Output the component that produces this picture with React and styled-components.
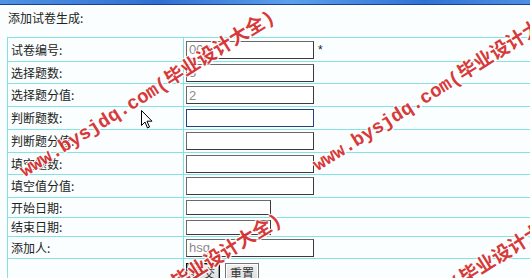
import React from "react";
import styled, { createGlobalStyle } from "styled-components";

const GlobalStyle = createGlobalStyle`
  html, body {
    margin: 0;
    padding: 0;
    background: #fbfefe;
    overflow: hidden;
  }
  body {
    font-family: "Noto Sans CJK SC", "Liberation Sans", sans-serif;
    font-size: 12px;
    color: #222;
  }
`;

const Page = styled.div`
  position: relative;
  width: 530px;
  height: 278px;
  overflow: hidden;
`;

const TopBar = styled.div`
  height: 4px;
  background: linear-gradient(90deg, #4f93e6 0%, #2f6fd2 30%, #5aa0ee 55%, #2f72d6 80%, #4e8fe4 100%);
  border-bottom: 1px solid #1d3f8f;
`;

const Content = styled.div`
  padding: 4px 0 0 7px;
`;

const Heading = styled.div`
  height: 17px;
  line-height: 17px;
  padding-left: 1px;
  margin-bottom: 11px;
`;

const FormTable = styled.table`
  width: 560px;
  border-collapse: collapse;
  background: #fafefe;

  td {
    border: 1px solid #84e2e2;
    padding: 0 2px;
    vertical-align: middle;
  }
`;

const Row = styled.tr`
  height: ${(p) => p.$h}px;
`;

const LabelCell = styled.td`
  width: 170px;
  padding-left: 3px !important;
  line-height: 14px;
`;

const Field = styled.input`
  box-sizing: border-box;
  display: block;
  width: ${(p) => (p.$short ? "85px" : "128px")};
  height: ${(p) => (p.$short ? "15px" : "18px")};
  margin: 0;
  padding: 0 2px;
  border: 1px solid ${(p) => (p.$focus ? "#24447e" : "#3a3a3a")};
  border-top-color: ${(p) => (p.$focus ? "#24447e" : "#6a6a6a")};
  border-left-color: ${(p) => (p.$focus ? "#24447e" : "#6a6a6a")};
  background: #fff;
  font-family: "Liberation Sans", Arial, sans-serif;
  font-size: 13px;
  color: #8a8a8a;
  outline: none;
`;

const FieldWrap = styled.div`
  display: flex;
  align-items: center;
  gap: 4px;
`;

const Star = styled.span`
  font-family: "Liberation Sans", Arial, sans-serif;
  font-size: 12px;
  color: #222;
`;

const Buttons = styled.div`
  display: flex;
  gap: 5px;
  padding-top: 3px;
`;

const Button = styled.button`
  box-sizing: border-box;
  width: 34px;
  height: 19px;
  padding: 0;
  font-family: "Noto Sans CJK SC", sans-serif;
  font-size: 12px;
  color: #333;
  background: linear-gradient(#f2f2f2, #dcdcdc);
  border: 1px solid ${(p) => (p.$primary ? "#111" : "#777")};
  box-shadow: ${(p) => (p.$primary ? "inset 0 0 0 1px #999" : "inset 0 0 0 1px #fff")};
`;

const Overlay = styled.div`
  position: absolute;
  inset: 0;
  pointer-events: none;
`;

const Mark = styled.span`
  position: absolute;
  white-space: nowrap;
  transform: translateY(-50%) rotate(-32deg);
  transform-origin: 0 50%;
  font-family: "Liberation Mono", "Noto Sans CJK SC", monospace;
  font-weight: bold;
  font-size: 19px;
  line-height: 20px;
  color: #d42a2a;
  text-shadow: 1px 0 #fff, -1px 0 #fff, 0 1px #fff, 0 -1px #fff, 1px 1px #fff, -1px -1px #fff;
  opacity: 0.92;
`;

const Cursor = styled.svg`
  position: absolute;
  left: 141px;
  top: 110px;
`;

const rows = [
  { label: "试卷编号:", value: "002", star: true, h: 24 },
  { label: "选择题数:", value: "3", h: 22 },
  { label: "选择题分值:", value: "2", h: 23 },
  { label: "判断题数:", value: "", focus: true, h: 23 },
  { label: "判断题分值:", value: "", h: 23 },
  { label: "填空题数:", value: "", h: 22 },
  { label: "填空值分值:", value: "", h: 23 },
  { label: "开始日期:", value: "", short: true, h: 20 },
  { label: "结束日期:", value: "", short: true, h: 19 },
  { label: "添加人:", value: "hsg", h: 22 },
];

const marks = [
  { x: 22, y: 173 },
  { x: 315, y: 167 },
  { x: 29, y: 376 },
  { x: 317, y: 371 },
];

const App = () => {
  return (
    <Page>
      <GlobalStyle />
      <TopBar />
      <Content>
        <Heading>添加试卷生成:</Heading>
        <FormTable>
          <tbody>
            {rows.map((row) => (
              <Row key={row.label} $h={row.h}>
                <LabelCell>{row.label}</LabelCell>
                <td>
                  <FieldWrap>
                    <Field
                      readOnly
                      value={row.value}
                      $short={row.short}
                      $focus={row.focus}
                    />
                    {row.star && <Star>*</Star>}
                  </FieldWrap>
                </td>
              </Row>
            ))}
            <Row $h={24}>
              <LabelCell />
              <td>
                <Buttons>
                  <Button $primary>提交</Button>
                  <Button>重置</Button>
                </Buttons>
              </td>
            </Row>
          </tbody>
        </FormTable>
      </Content>
      <Overlay>
        {marks.map((m, i) => (
          <Mark key={i} style={{ left: m.x, top: m.y }}>
            www.bysjdq.com(毕业设计大全)
          </Mark>
        ))}
        <Cursor width="12" height="20" viewBox="0 0 12 20">
          <path
            d="M0.5 0.5 L0.5 15.5 L4 12 L6.5 18 L8.5 17 L6 11.2 L11 11.2 Z"
            fill="#fff"
            stroke="#000"
            strokeWidth="1"
          />
        </Cursor>
      </Overlay>
    </Page>
  );
};

export default App;
